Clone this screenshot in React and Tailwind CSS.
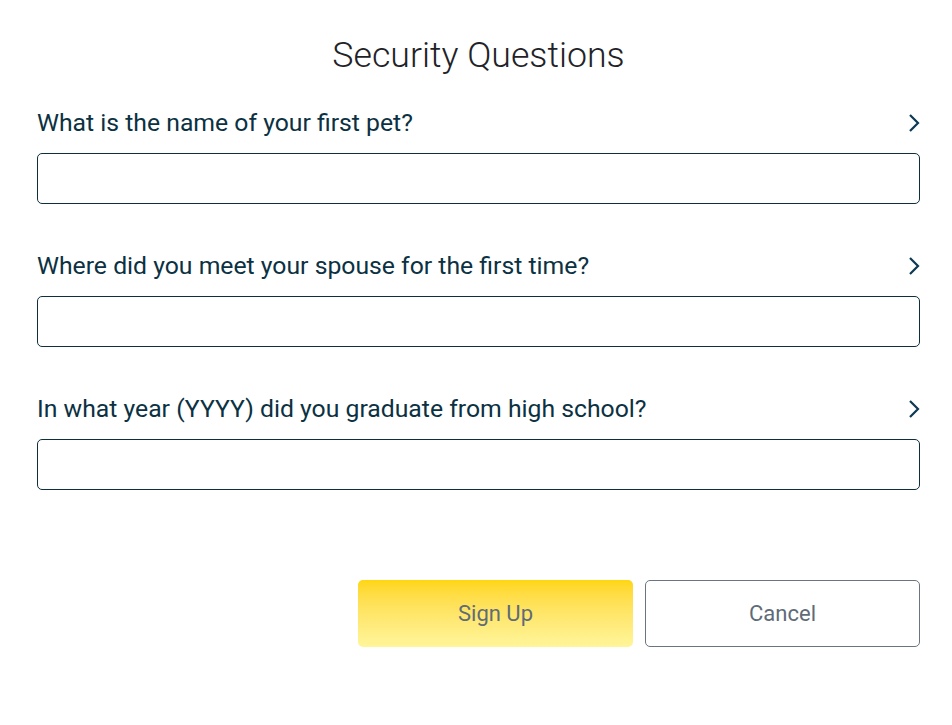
import { useState } from 'react'

const questions = [
  'What is the name of your first pet?',
  'Where did you meet your spouse for the first time?',
  'In what year (YYYY) did you graduate from high school?',
]

function Chevron() {
  return (
    <svg width="12" height="20" viewBox="0 0 12 20" fill="none" className="shrink-0">
      <path d="M2 2l8 8-8 8" stroke="#0c3a55" strokeWidth="2.2" />
    </svg>
  )
}

export default function App() {
  const [answers, setAnswers] = useState(['', '', ''])

  const update = (i, v) => {
    const next = [...answers]
    next[i] = v
    setAnswers(next)
  }

  return (
    <div className="min-h-[725px] bg-white pl-[37px] pr-[32px] pt-[35px] font-['Roboto',sans-serif]">
      <h1 className="text-center text-[35.7px] font-light leading-[40px] text-[#1f2328]">Security Questions</h1>

      <div className="mt-[18px] flex flex-col gap-[32px]">
        {questions.map((q, i) => (
          <div key={i}>
            <div className="flex items-center justify-between h-[60px]">
              <span className="text-[24.75px] text-[#0b3142]">{q}</span>
              <Chevron />
            </div>
            <input
              type="text"
              value={answers[i]}
              onChange={e => update(i, e.target.value)}
              className="block w-full h-[51px] rounded-[5px] border border-[#0e2f3d] px-3 text-lg outline-none"
            />
          </div>
        ))}
      </div>

      <div className="flex justify-end gap-[12px] mt-[90px]">
        <button className="w-[275px] h-[67px] rounded-[5px] bg-gradient-to-b from-[#ffd60a] to-[#fff59a] text-[22px] text-[#5f6b78]">
          Sign Up
        </button>
        <button className="w-[275px] h-[67px] rounded-[5px] border border-[#6b7580] bg-white text-[22px] text-[#5f6b78]">
          Cancel
        </button>
      </div>
    </div>
  )
}
